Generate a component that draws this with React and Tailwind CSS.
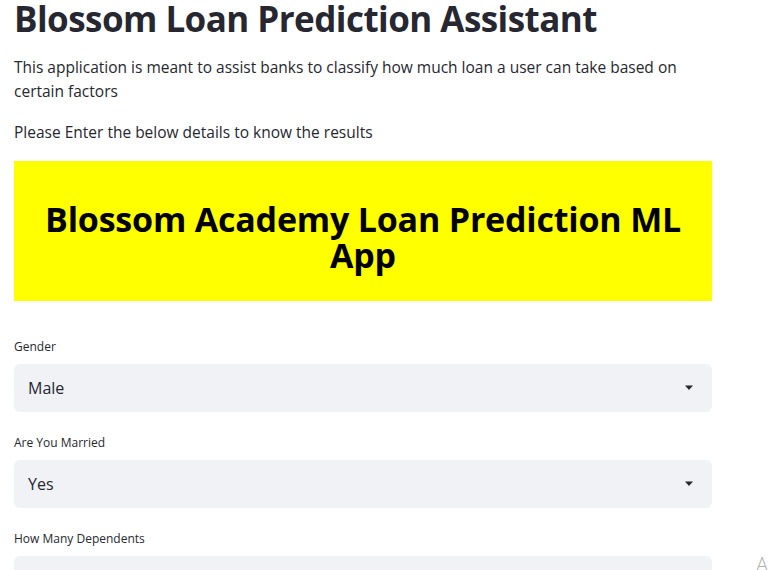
import React from "react";

function Caret() {
  return (
    <svg width="10" height="6" viewBox="0 0 10 6" className="shrink-0">
      <path d="M1 0.5 L9 0.5 L5 5 Z" fill="#262730" />
    </svg>
  );
}

function SelectField({ label, value }) {
  return (
    <div className="flex flex-col">
      <label className="text-[12px] leading-4 text-[#262730] mb-[9px]">{label}</label>
      <div className="h-12 rounded-[6px] bg-[#f0f2f6] flex items-center justify-between pl-[14px] pr-[18px]">
        <span className="text-[16px] text-[#262730]">{value}</span>
        {value !== null && <Caret />}
      </div>
    </div>
  );
}

export default function App() {
  return (
    <div
      className="relative w-[768px] h-[570px] overflow-hidden bg-white text-[#262730]"
      style={{ fontFamily: '"Open Sans", sans-serif' }}
    >
      <div className="w-[698px] ml-[14px] -mt-[3px]">
        <h1 className="text-[35px] leading-[44px] font-bold tracking-[-0.55px] text-[#262730]">
          Blossom Loan Prediction Assistant
        </h1>
        <p className="mt-[14px] text-[15.5px] leading-6">
          This application is meant to assist banks to classify how much loan a user can take based on
          certain factors
        </p>
        <p className="mt-[17px] text-[15.5px] leading-6">Please Enter the below details to know the results</p>

        <div className="mt-[17px] h-[140px] bg-[#ffff00] flex items-center justify-center px-6 pt-3">
          <h2 className="text-center text-black font-bold text-[34px] leading-[36px] tracking-[-0.2px]">
            Blossom Academy Loan Prediction ML App
          </h2>
        </div>

        <div className="mt-[38px] flex flex-col gap-[23px]">
          <SelectField label="Gender" value="Male" />
          <SelectField label="Are You Married" value="Yes" />
          <SelectField label="How Many Dependents" value={null} />
        </div>
      </div>
      <span className="absolute left-[756px] top-[550px] text-[20px] text-[#b0b0b0] font-light">A</span>
    </div>
  );
}
